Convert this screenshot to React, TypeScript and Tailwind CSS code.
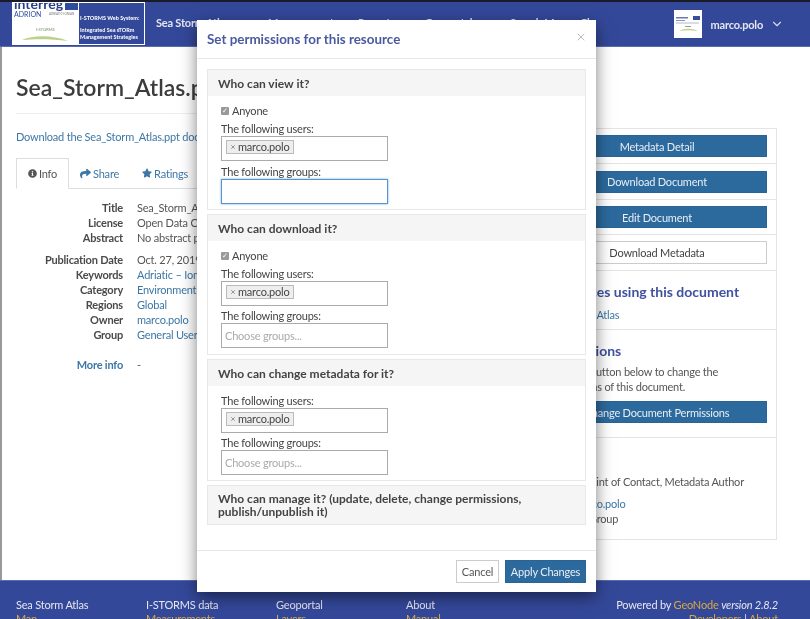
import React from 'react';
import { FaInfoCircle, FaShare, FaStar } from 'react-icons/fa';
import { ChevronDown, X } from 'lucide-react';

const details = [
    { label: 'Title', value: 'Sea_Storm_Atlas', link: false },
    { label: 'License', value: 'Open Data Commons', link: false },
    { label: 'Abstract', value: 'No abstract provided', link: false },
];

const details2 = [
    { label: 'Publication Date', value: 'Oct. 27, 2019', link: false },
    { label: 'Keywords', value: 'Adriatic – Ionian', link: true },
    { label: 'Category', value: 'Environment', link: true },
    { label: 'Regions', value: 'Global', link: true },
    { label: 'Owner', value: 'marco.polo', link: true },
    { label: 'Group', value: 'General Users', link: true },
];

const DetailRow: React.FC<{ label: string; value: string; link: boolean }> = ({ label, value, link }) => (
    <div className="flex h-[15px] items-center gap-[14px] whitespace-nowrap">
        <span className="w-[107px] text-right font-bold text-[#4a4a4a]">{label}</span>
        <span className={link ? 'text-[#3d77a6]' : 'text-[#555]'}>{value}</span>
    </div>
);

const ActionButton: React.FC<{ children: React.ReactNode }> = ({ children }) => (
    <div className="flex h-[22px] items-center justify-center border border-[#2a6496] bg-[#2c6a9e] text-[#e8eef4]">
        {children}
    </div>
);

const FooterColumn: React.FC<{ title: string; link: string; className: string }> = ({ title, link, className }) => (
    <div className={className}>
        <div className="h-[14px] text-[#e4e6f0]">{title}</div>
        <div className="text-[#d9a93f]">{link}</div>
    </div>
);

const Logo: React.FC = () => (
    <div className="flex h-[43px] w-[133px] border border-white bg-white">
        <div className="relative w-[66px] overflow-hidden bg-white">
            <span className="absolute left-[1px] top-[-7px] text-[14px] font-bold leading-[16px] tracking-normal text-[#2a3f8c]">interreg</span>
            <div className="absolute left-[52px] top-0 h-[7px] w-[13px] bg-[#2f4b9c]" />
            <span className="absolute left-[1px] top-[7px] text-[7px] leading-[8px] tracking-normal text-[#2f4b9c]">ADRION</span>
            <span className="absolute left-[36px] top-[9px] text-[3px] leading-[5px] tracking-normal text-[#777]">ADRIATIC-IONIAN</span>
            <span className="absolute left-[23px] top-[24px] text-[4px] leading-[6px] tracking-normal text-[#7a8a6a]">I-STORMS</span>
            <svg className="absolute left-[8px] top-[31px]" width="48" height="10" viewBox="0 0 48 10">
                <path d="M1 6 C12 1 32 1 47 7 C32 5 14 5 1 6 Z" fill="#bcd08a" />
            </svg>
        </div>
        <div className="flex flex-1 flex-col bg-[#34489a] pl-[1px] text-[5.5px] font-bold leading-[7px] tracking-normal text-white">
            <span className="mt-[12px] whitespace-nowrap">I-STORMS Web System:</span>
            <span className="mt-[5px] whitespace-nowrap">Integrated Sea sTORm</span>
            <span className="whitespace-nowrap">Management Strategies</span>
        </div>
    </div>
);

const Avatar: React.FC = () => (
    <svg className="mr-[9px]" width="28" height="28" viewBox="0 0 28 28">
        <rect width="28" height="28" fill="#fff" />
        <rect x="2" y="7" width="12" height="1.5" fill="#6a78ac" />
        <rect x="2" y="10" width="9" height="1" fill="#8a94bc" />
        <rect x="2" y="12.5" width="23" height="1" fill="#b4bacf" />
        <rect x="19" y="6" width="7" height="4" fill="#3a4c9a" />
        <rect x="11" y="16" width="6" height="1" fill="#9aa08c" />
        <path d="M5 21 C11 18 18 18 24 21 C18 20 11 20 5 21 Z" fill="#bcd08a" />
    </svg>
);

const UserTag: React.FC = () => (
    <div className="flex h-[25px] border border-[#aaa] bg-white pl-[4px] pt-[3px]">
        <span className="flex h-[14px] items-center gap-[2px] border border-[#bbb] bg-[#eee] pb-[1px] pl-[3px] pr-[3px] text-[#444]">
            <X size={6} strokeWidth={3} className="text-[#777]" />
            marco.polo
        </span>
    </div>
);

const GroupsInput: React.FC<{ focused?: boolean }> = ({ focused }) => (
    <div
        className={
            focused
                ? 'h-[25px] border border-[#5c93c8] bg-white shadow-[0_0_2px_#66afe9]'
                : 'flex h-[25px] items-center border border-[#aaa] bg-white pl-[3px] text-[#aaa]'
        }
    >
        {focused ? null : 'Choose groups...'}
    </div>
);

const PermissionSection: React.FC<{ title: string; anyone?: boolean; focused?: boolean; className: string }> = ({
    title,
    anyone,
    focused,
    className,
}) => (
    <div className={`border border-[#e8e8e8] ${className}`}>
        <div className="flex h-[26px] items-center bg-[#f5f5f5] pl-[10px] text-[12px] font-bold tracking-normal text-[#444]">{title}</div>
        <div className="px-[13px] text-[#444]">
            {anyone && (
                <div className="mt-[7px] flex h-[15px] items-center gap-[3px]">
                    <span className="flex h-[8px] w-[8px] items-center justify-center rounded-[1px] bg-[#999] text-[7px] leading-none text-white">
                        ✓
                    </span>
                    Anyone
                </div>
            )}
            <div className={anyone ? 'mt-[3px] h-[15px]' : 'mt-[7px] h-[15px]'}>The following users:</div>
            <div className="w-[167px]">
                <UserTag />
            </div>
            <div className={focused ? 'mt-[3px] h-[15px]' : 'mt-[2px] h-[15px]'}>The following groups:</div>
            <div className="w-[167px]">
                <GroupsInput focused={focused} />
            </div>
        </div>
    </div>
);

export default function App() {
    return (
        <div className="relative flex h-[619px] w-[810px] flex-col overflow-hidden bg-white font-['Lato',sans-serif] text-[11px] leading-[15px] tracking-[-0.2px] blur-[0.4px]">
            {/* Top bar */}
            <div className="h-[2px] shrink-0 bg-[#1a1a2a]" />
            <header className="flex h-[45px] shrink-0 items-center border-b border-b-[#5a6ab0] bg-[#34489a] text-white">
                <div className="ml-[12px] self-start">
                    <Logo />
                </div>
                <nav className="mb-[3px] ml-[11px] flex whitespace-nowrap font-bold text-[#e4e6f0]">
                    <span className="w-[112px]">Sea Storm Atlas</span>
                    <span className="w-[90px]">Measurements</span>
                    <span className="w-[67px]">Reports</span>
                    <span className="w-[85px]">Geoportal</span>
                    <span className="w-[70px]">Search Map</span>
                    <span>Ch</span>
                </nav>
                <div className="ml-auto flex items-center pr-[26px]">
                    <Avatar />
                    <span className="font-bold text-[#e4e6f0]">marco.polo</span>
                    <ChevronDown size={14} className="ml-[7px] text-[#d5d8ea]" />
                </div>
            </header>

            {/* Page body */}
            <main className="flex flex-1 gap-[16px] border-l-2 border-l-[#999] pl-[14px] pr-[34px]">
                <div className="w-[505px] shrink-0 overflow-hidden">
                    <h1 className="mt-[26px] whitespace-nowrap text-[23px] font-semibold leading-[28px] tracking-normal text-[#3c3c3c]">
                        Sea_Storm_Atlas.ppt
                    </h1>
                    <div className="mt-[12px] w-[744px] border-t border-t-[#eee]" />
                    <div className="mt-[15px] whitespace-nowrap text-[#3d77a6]">Download the Sea_Storm_Atlas.ppt document</div>
                    <div className="mt-[14px] flex h-[31px] items-stretch border-b border-b-[#ddd]">
                        <div className="mb-[-1px] flex w-[53px] items-center justify-center gap-[2px] border border-[#ddd] border-b-white text-[#555]">
                            <FaInfoCircle size={9} />
                            Info
                        </div>
                        <div className="ml-[11px] flex items-center gap-[2px] text-[#3d77a6]">
                            <FaShare size={11} />
                            Share
                        </div>
                        <div className="ml-[23px] flex items-center gap-[2px] text-[#3d77a6]">
                            <FaStar size={10} />
                            Ratings
                        </div>
                    </div>
                    <div className="mt-[11px]">
                        {details.map((row) => (
                            <DetailRow key={row.label} {...row} />
                        ))}
                    </div>
                    <div className="mt-[7px]">
                        {details2.map((row) => (
                            <DetailRow key={row.label} {...row} />
                        ))}
                    </div>
                    <div className="mt-[15px] flex h-[15px] items-center gap-[14px]">
                        <span className="w-[107px] text-right font-bold text-[#3d77a6]">More info</span>
                        <span className="text-[#555]">-</span>
                    </div>
                </div>

                {/* Right column */}
                <aside className="mt-[81px] h-[412px] w-[240px] shrink-0 border border-[#e4e4e4] text-[#555]">
                    <div className="flex h-[35px] flex-col justify-center border-b border-b-[#e4e4e4] px-[9px]">
                        <ActionButton>Metadata Detail</ActionButton>
                    </div>
                    <div className="flex h-[36px] flex-col justify-center border-b border-b-[#e4e4e4] px-[9px]">
                        <ActionButton>Download Document</ActionButton>
                    </div>
                    <div className="flex h-[35px] flex-col justify-center border-b border-b-[#e4e4e4] px-[9px]">
                        <ActionButton>Edit Document</ActionButton>
                    </div>
                    <div className="flex h-[36px] flex-col justify-center border-b border-b-[#e4e4e4] px-[9px]">
                        <div className="flex h-[23px] items-center justify-center border border-[#ccc] text-[#444]">Download Metadata</div>
                    </div>
                    <div className="h-[59px] border-b border-b-[#e4e4e4] px-[9px] pt-[12px]">
                        <div className="whitespace-nowrap text-[14px] font-bold leading-[18px] tracking-normal text-[#3f51a0]">Resources using this document</div>
                        <div className="mt-[6px] whitespace-nowrap text-[#3d77a6]">Sea Storm Atlas</div>
                    </div>
                    <div className="h-[108px] border-b border-b-[#e4e4e4] px-[9px] pt-[12px]">
                        <div className="whitespace-nowrap text-[14px] font-bold leading-[18px] tracking-normal text-[#3f51a0]">Permissions</div>
                        <div className="mt-[4px] leading-[15px]">
                            Click the button below to change the
                            <br />
                            permissions of this document.
                        </div>
                        <div className="mt-[7px]">
                            <ActionButton>Change Document Permissions</ActionButton>
                        </div>
                    </div>
                    <div className="px-[9px] pt-[36px]">
                        <div className="whitespace-nowrap pl-[7px]">Roles: Point of Contact, Metadata Author</div>
                        <div className="mt-[7px] pl-[27px] text-[#3d77a6]">marco.polo</div>
                        <div className="pl-[3px]">General Group</div>
                    </div>
                </aside>
            </main>

            {/* Footer */}
            <footer className="relative flex h-[39px] shrink-0 whitespace-nowrap border-t border-t-[#5a6ab0] bg-[#34489a] pl-[16px] pt-[16px]">
                <FooterColumn className="w-[130px]" title="Sea Storm Atlas" link="Map" />
                <FooterColumn className="w-[130px]" title="I-STORMS data" link="Measurements" />
                <FooterColumn className="w-[130px]" title="Geoportal" link="Layers" />
                <FooterColumn className="w-[130px]" title="About" link="Manual" />
                <div className="ml-auto pr-[32px] text-right text-[#e4e6f0]">
                    <div className="h-[14px]">
                        Powered by <span className="text-[#d9a93f]">GeoNode</span> <em>version 2.8.2</em>
                    </div>
                    <div className="text-[#d9a93f]">
                        Developers <span className="text-[#e4e6f0]">|</span> About
                    </div>
                </div>
            </footer>

            {/* Permissions modal */}
            <div className="absolute left-[197px] top-[20px] flex h-[572px] w-[399px] flex-col bg-white shadow-[0_5px_15px_rgba(0,0,0,0.5)]">
                <div className="flex h-[39px] shrink-0 items-center justify-between border-b border-b-[#e8e8e8] pl-[10px] pr-[9px]">
                    <span className="text-[13.4px] font-bold tracking-normal text-[#4a5aa0]">Set permissions for this resource</span>
                    <X size={12} className="mb-[4px] text-[#bbb]" />
                </div>
                <div className="flex flex-1 flex-col gap-[4px] px-[10px] pt-[10px]">
                    <PermissionSection className="h-[141px]" title="Who can view it?" anyone focused />
                    <PermissionSection className="h-[141px]" title="Who can download it?" anyone />
                    <PermissionSection className="h-[122px]" title="Who can change metadata for it?" />
                    <div className="flex h-[40px] items-center border border-[#e8e8e8] bg-[#f5f5f5] pl-[10px] text-[12px] font-bold leading-[13px] tracking-normal text-[#444]">
                        <span className="w-[345px]">Who can manage it? (update, delete, change permissions, publish/unpublish it)</span>
                    </div>
                </div>
                <div className="flex h-[42px] shrink-0 items-center justify-end gap-[6px] border-t border-t-[#e8e8e8] pr-[10px]">
                    <div className="flex h-[23px] w-[43px] items-center justify-center border border-[#ccc] text-[#555]">Cancel</div>
                    <div className="flex h-[23px] w-[81px] items-center justify-center border border-[#2a6496] bg-[#2c6a9e] text-[#e8eef4]">Apply Changes</div>
                </div>
            </div>
        </div>
    );
}
